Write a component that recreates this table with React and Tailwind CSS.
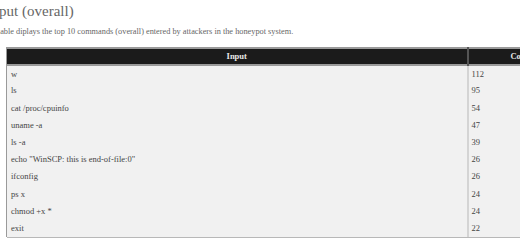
const rows = [
  ['w', 112],
  ['ls', 95],
  ['cat /proc/cpuinfo', 54],
  ['uname -a', 47],
  ['ls -a', 39],
  ['echo "WinSCP: this is end-of-file:0"', 26],
  ['ifconfig', 26],
  ['ps x', 24],
  ['chmod +x *', 24],
  ['exit', 22],
];

export default function App() {
  return (
    <div className="w-[520px] h-[245px] overflow-hidden bg-white font-['Liberation_Serif',serif]">
      <h2 className="-ml-[59px] pt-[1px] h-[22px] text-[15px] leading-[20px] text-[#666] whitespace-nowrap">
        Top 10 Input (overall)
      </h2>
      <p className="-ml-[19px] mt-[5px] h-[20px] text-[8.3px] leading-[10px] text-[#666] whitespace-nowrap">
        This table diplays the top 10 commands (overall) entered by attackers in the honeypot system.
      </p>
      <div className="pl-[6px]">
        <table className="w-[569px] border-collapse text-[8.5px] text-[#444]">
          <thead>
            <tr className="bg-[#1b1b1b] text-[#e8e8e8] border-t-2 border-b-2 border-[#9a9a9a]">
              <th className="w-[461px] h-[17px] p-0 text-center font-bold border-l border-[#9a9a9a]">Input</th>
              <th className="h-[17px] p-0 text-center font-bold border-l-2 border-[#555]">Count</th>
            </tr>
          </thead>
          <tbody className="bg-[#f1f1f1]">
            {rows.map(([cmd, n]) => (
              <tr key={cmd} className="h-[17.2px]">
                <td className="pl-[4px] py-0 border-l border-[#9a9a9a] whitespace-nowrap">{cmd}</td>
                <td className="pl-[3px] py-0 border-l-2 border-[#d4d4d4]">{n}</td>
              </tr>
            ))}
            <tr className="h-[1px]">
              <td colSpan={2} className="p-0 h-[1px] bg-[#b8b8b8]"></td>
            </tr>
          </tbody>
        </table>
      </div>
    </div>
  );
}
